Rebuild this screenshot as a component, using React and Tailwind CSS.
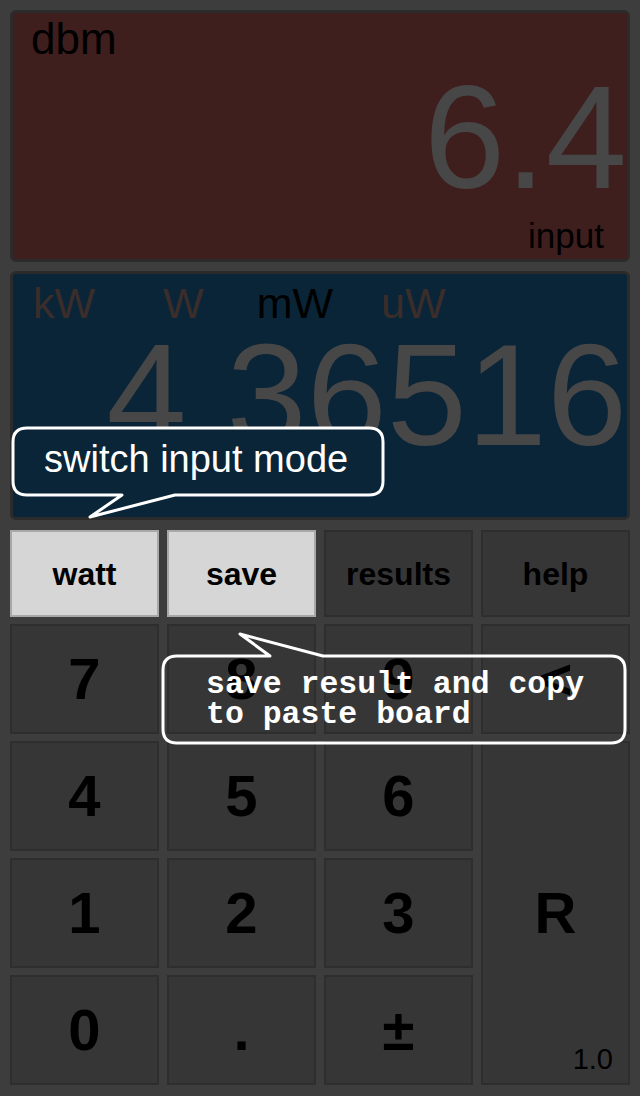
const sans = { fontFamily: '"Liberation Sans", Arial, Helvetica, sans-serif' }

function Key({ label, light, className = '', children }) {
  return (
    <div
      className={`relative flex items-center justify-center border-2 font-bold leading-none text-black ${
        light ? 'bg-[#d6d6d6] border-[#a8a8a8]' : 'bg-[#363636] border-[#2e2e2e]'
      } ${className}`}
    >
      {label}
      {children}
    </div>
  )
}

export default function App() {
  return (
    <div className="relative w-[640px] h-[1096px] bg-[#3d3d3d] p-[10px] flex flex-col overflow-hidden" style={sans}>
      {/* dbm input panel */}
      <div className="h-[252px] rounded-[6px] border-[3px] border-[#2b2b2b] bg-[#3f1e1e] flex flex-col pt-[4px]">
        <div className="pl-[18px] text-[44px] leading-none text-black">dbm</div>
        <div className="mt-[4px] text-right text-[146px] leading-none text-[#474747]">6.4</div>
        <div className="mt-[7px] pr-[23px] text-right text-[35px] leading-none text-black">input</div>
      </div>

      {/* watt result panel */}
      <div className="mt-[9px] h-[249px] rounded-[6px] border-[3px] border-[#2b2b2b] bg-[#0b2538] flex flex-col pt-[8px]">
        <div className="flex text-[43px] leading-none">
          <span className="ml-[20px] text-[#3a2d2a]">kW</span>
          <span className="ml-[68px] text-[#3a2d2a]">W</span>
          <span className="ml-[53px] text-black">mW</span>
          <span className="ml-[48px] text-[#3a2d2a]">uW</span>
        </div>
        <div className="-mt-[1px] text-right text-[144px] leading-none text-[#474747]">4.36516</div>
      </div>

      {/* keypad */}
      <div className="mt-[10px] grid grid-cols-4 grid-rows-[87px_110px_110px_110px_110px] gap-x-[8px] gap-y-[7px]">
        <Key label="watt" light className="text-[32px]" />
        <Key label="save" light className="text-[32px]" />
        <Key label="results" className="text-[32px]" />
        <Key label="help" className="text-[32px]" />

        <Key label="7" className="text-[58px]" />
        <Key label="8" className="text-[58px]" />
        <Key label="9" className="text-[58px]" />
        <Key label="<" className="text-[58px]" />

        <Key label="4" className="text-[58px]" />
        <Key label="5" className="text-[58px]" />
        <Key label="6" className="text-[58px]" />
        <Key label="R" className="row-span-3 text-[58px]">
          <span className="absolute right-[15px] bottom-[9px] text-[29px] font-normal leading-none text-black">1.0</span>
        </Key>

        <Key label="1" className="text-[58px]" />
        <Key label="2" className="text-[58px]" />
        <Key label="3" className="text-[58px]" />

        <Key label="0" className="text-[58px]" />
        <Key label="." className="text-[58px]" />
        <Key label="±" className="text-[58px]" />
      </div>

      {/* help callouts */}
      <svg className="absolute left-0 top-0 pointer-events-none" width="640" height="1096" viewBox="0 0 640 1096">
        <path
          d="M27 428 H369 Q383 428 383 442 V481 Q383 495 369 495 H175 L90 517 L122 495 H27 Q13 495 13 481 V442 Q13 428 27 428 Z"
          fill="#0b2538"
          stroke="#ffffff"
          strokeWidth="3"
          strokeLinejoin="round"
        />
        <path
          d="M177 656 H270 L240 634 L323 656 H611 Q625 656 625 670 V729 Q625 743 611 743 H177 Q163 743 163 729 V670 Q163 656 177 656 Z"
          fill="none"
          stroke="#ffffff"
          strokeWidth="3"
          strokeLinejoin="round"
        />
      </svg>
      <div className="absolute left-[44px] top-[440px] text-[38px] leading-none text-white whitespace-nowrap">
        switch input mode
      </div>
      <div
        className="absolute left-[206px] top-[670px] text-[31.5px] leading-[30px] font-bold text-white whitespace-pre"
        style={{ fontFamily: '"Liberation Mono", "DejaVu Sans Mono", monospace' }}
      >
        {'save result and copy\nto paste board'}
      </div>
    </div>
  )
}
